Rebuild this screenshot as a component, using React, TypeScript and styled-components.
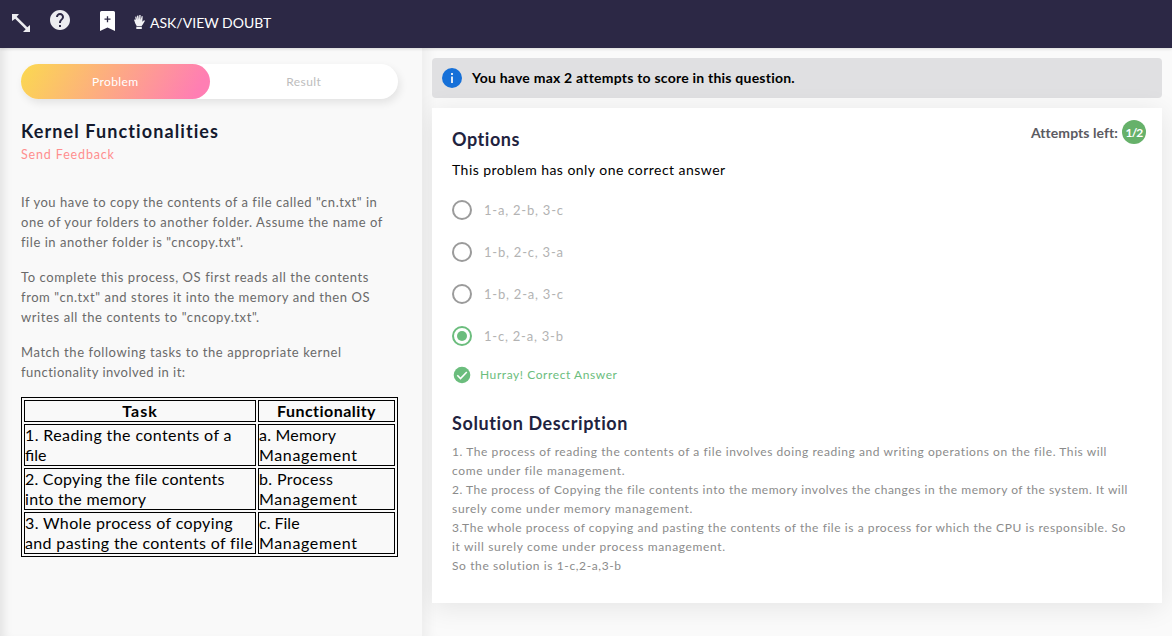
import React from 'react';
import styled, { createGlobalStyle } from 'styled-components';

const GlobalStyle = createGlobalStyle`
  * { box-sizing: border-box; }
  body { margin: 0; background: #fafafa; font-family: Lato, "Open Sans", sans-serif; color: #000; overflow: hidden; }
  p, h1, h2 { margin: 0; }
`;

const Page = styled.div`
  display: flex;
  flex-direction: column;
  height: 636px;
`;

const Header = styled.header`
  display: flex;
  flex: none;
  height: 48px;
  padding-left: 12px;
  background: #2c2845;
  color: #fff;
  box-shadow: 0 1px 3px rgba(0, 0, 0, 0.14);
  z-index: 2;
`;

const ExpandIcon = styled.svg`
  width: 18px;
  height: 18px;
  margin-top: 14px;
`;

const HelpIcon = styled.svg`
  width: 24px;
  height: 24px;
  margin: 8px 0 0 18px;
`;

const BookmarkIcon = styled.svg`
  width: 15px;
  height: 20px;
  margin: 11px 0 0 28px;
`;

const HandIcon = styled.svg`
  width: 11px;
  height: 14px;
  margin: 15px 5px 0 19px;
`;

const Line = styled.span<{ $track?: number }>`
  display: block;
  white-space: pre;
  letter-spacing: ${(p) => p.$track ?? 0}px;
`;

const DoubtLink = styled.div`
  margin-top: 13px;
  font-size: 14px;
  line-height: 20px;
`;

const Body = styled.main`
  display: flex;
  flex: 1;
  min-height: 0;
`;

const ProblemPane = styled.section`
  flex: none;
  width: 422px;
  padding: 16px 24px 0 21px;
  background: #f9f9f9;
  box-shadow: inset 10px 0 10px -6px rgba(0, 0, 0, 0.09);
  z-index: 1;
`;

const Tabs = styled.nav`
  display: flex;
  height: 35px;
  border-radius: 18px;
  background: #fff;
  box-shadow: 2px 4px 8px rgba(0, 0, 0, 0.09);
`;

const Tab = styled.div<{ $active?: boolean }>`
  display: flex;
  flex: 1;
  align-items: center;
  justify-content: center;
  border-radius: 18px;
  font-size: 12px;
  line-height: 16px;
  color: ${(p) => (p.$active ? '#fff' : '#bdbdbd')};
  background: ${(p) => (p.$active ? 'linear-gradient(119deg, #fbd950, #ff7eb3 92%)' : 'none')};
`;

const ProblemTitle = styled.h1`
  margin-top: 21px;
  font-size: 18px;
  line-height: 22px;
  color: #141a2e;
`;

const Feedback = styled.div`
  margin-top: 5px;
  font-size: 12.5px;
  line-height: 16px;
  color: #ff8f8f;
`;

const Statement = styled.div`
  display: flex;
  flex-direction: column;
  gap: 15px;
  margin-top: 29px;
  font-size: 13px;
  line-height: 20px;
  color: #6a6a6a;
`;

const TaskTable = styled.table`
  width: 377px;
  margin-top: 15px;
  border: 1px solid #000;
  border-spacing: 2px;
  table-layout: fixed;
  font-size: 16px;
  line-height: 20px;
`;

const Cell = styled.td`
  padding: 0;
  border: 1px solid #000;
`;

const HeadCell = styled.th<{ $width: number }>`
  width: ${(p) => p.$width}px;
  padding: 0;
  border: 1px solid #000;
`;

const AnswerPane = styled.section`
  flex: 1;
  padding: 10px 10px 0;
  box-shadow: inset 14px 0 12px -8px rgba(0, 0, 0, 0.05);
`;

const Notice = styled.div`
  display: flex;
  align-items: center;
  gap: 10px;
  height: 40px;
  padding-left: 10px;
  border-radius: 4px;
  background: #e0e0e2;
  font-size: 14px;
  font-weight: 700;
  line-height: 20px;
`;

const InfoIcon = styled.svg`
  width: 20px;
  height: 20px;
`;

const Card = styled.div`
  height: 495px;
  margin-top: 10px;
  padding: 12px 16px 0 20px;
  background: #fff;
  box-shadow: 0 4px 26px rgba(0, 0, 0, 0.09);
`;

const CardTop = styled.div`
  display: flex;
  justify-content: space-between;
  height: 39px;
`;

const Heading = styled.h2`
  padding-top: 8px;
  font-size: 18px;
  line-height: 22px;
  color: #1f2340;
`;

const Attempts = styled.div`
  display: flex;
  align-items: center;
  gap: 4px;
  height: 24px;
  font-size: 14px;
  font-weight: 700;
  color: #5b5b62;
`;

const AttemptBadge = styled.div`
  display: flex;
  align-items: center;
  justify-content: center;
  width: 24px;
  height: 24px;
  border-radius: 50%;
  background: #66b16a;
  color: #fff;
  font-size: 12px;
`;

const Hint = styled.div`
  margin-top: 1px;
  font-size: 14px;
  line-height: 20px;
`;

const OptionList = styled.div`
  display: flex;
  flex-direction: column;
  gap: 22px;
  margin-top: 20px;
`;

const Option = styled.div`
  display: flex;
  align-items: center;
  gap: 12px;
  height: 20px;
  font-size: 13px;
  line-height: 20px;
  color: #b3b3b3;
`;

const Radio = styled.span<{ $checked: boolean }>`
  width: 20px;
  height: 20px;
  border: 2px solid ${(p) => (p.$checked ? '#6bbd7d' : '#9b9b9b')};
  border-radius: 50%;
  padding: 3px;

  &::after {
    content: '';
    display: block;
    width: 10px;
    height: 10px;
    border-radius: 50%;
    background: ${(p) => (p.$checked ? '#6bbd7d' : 'transparent')};
  }
`;

const Verdict = styled.div`
  display: flex;
  align-items: center;
  gap: 8px;
  height: 20px;
  margin-top: 19px;
  font-size: 12px;
  line-height: 20px;
  color: #6bbd7d;
`;

const CheckIcon = styled.svg`
  width: 20px;
  height: 20px;
`;

const SolutionHeading = styled(Heading)`
  padding: 0;
  margin-top: 27px;
`;

const Solution = styled.div`
  margin-top: 8px;
  font-size: 12px;
  line-height: 19px;
  color: #8b8b8b;
`;

type TextLine = [text: string, track: number];

const statement: TextLine[][] = [
  [
    ['If you have to copy the contents of a file called "cn.txt" in', 0.54],
    ['one of your folders to another folder. Assume the name of', 0.57],
    ['file in another folder is "cncopy.txt".', 0.55],
  ],
  [
    ['To complete this process, OS first reads all the contents', 0.58],
    ['from "cn.txt" and stores it into the memory and then OS', 0.57],
    ['writes all the contents to "cncopy.txt".', 0.59],
  ],
  [
    ['Match the following tasks to the appropriate kernel', 0.57],
    ['functionality involved in it:', 0.48],
  ],
];

const tasks: [TextLine[], TextLine[]][] = [
  [
    [['1. Reading the contents of a', 0.4], ['file', 0]],
    [['a. Memory', 0.22], ['Management', 0.64]],
  ],
  [
    [['2. Copying the file contents', 0.24], ['into the memory', 0.31]],
    [['b. Process', 0.37], ['Management', 0.64]],
  ],
  [
    [['3. Whole process of copying', 0.36], ['and pasting the contents of file', 0.35]],
    [['c. File', 0], ['Management', 0.64]],
  ],
];

const options = [
  { label: '1-a, 2-b, 3-c', checked: false },
  { label: '1-b, 2-c, 3-a', checked: false },
  { label: '1-b, 2-a, 3-c', checked: false },
  { label: '1-c, 2-a, 3-b', checked: true },
];

const solution: TextLine[] = [
  ['1. The process of reading the contents of a file involves doing reading and writing operations on the file. This will', 0.57],
  ['come under file management.', 0.65],
  ['2. The process of Copying the file contents into the memory involves the changes in the memory of the system. It will', 0.53],
  ['surely come under memory management.', 0.68],
  ['3.The whole process of copying and pasting the contents of the file is a process for which the CPU is responsible. So', 0.57],
  ['it will surely come under process management.', 0.65],
  ['So the solution is 1-c,2-a,3-b', 0.61],
];

const Lines = ({ lines }: { lines: TextLine[] }) => (
  <>
    {lines.map(([text, track]) => (
      <Line key={text} $track={track}>{text}</Line>
    ))}
  </>
);

export default function App() {
  return (
    <Page>
      <GlobalStyle />
      <Header>
        <ExpandIcon viewBox="0 0 18 18" fill="#ececf0">
          <path d="M0 0h7L4.700 2.700 15.300 13.300 18 11v7h-7l2.700-2.700L3.100 4.700 0 7z" />
        </ExpandIcon>
        <HelpIcon viewBox="0 0 24 24" fill="#ececf0">
          <path d="M12 2C6.48 2 2 6.48 2 12s4.48 10 10 10 10-4.48 10-10S17.52 2 12 2zm1 17h-2v-2h2v2zm2.07-7.75l-.9.92C13.45 12.9 13 13.5 13 15h-2v-.5c0-1.1.45-2.1 1.17-2.83l1.24-1.26c.37-.36.59-.86.59-1.41 0-1.1-.9-2-2-2s-2 .9-2 2H8c0-2.21 1.79-4 4-4s4 1.79 4 4c0 .88-.36 1.68-.93 2.25z" />
        </HelpIcon>
        <BookmarkIcon viewBox="0 0 15 20" fill="#fff">
          <path d="M1.5 0h12A1.5 1.5 0 0 1 15 1.5V20l-7.5-3.5L0 20V1.5A1.5 1.5 0 0 1 1.5 0z" />
          <path d="M7.5 5.200v6M4.500 8.200h6" stroke="#2c2845" strokeWidth="1.300" />
        </BookmarkIcon>
        <HandIcon viewBox="0 0 11 14" fill="#f2f2f5">
          <path d="M1.200 1.800 2.300 1.500 3.200 5 3 .800 4.300.500 5 4.800 5.300 0 6.600.100 6.600 4.900 7.700 1 8.700 1.300 8.300 6.800 10 5.200 11 5.800 8.600 9.700 7.600 11H2.700L1.300 8.600 0 4.700 1.100 4.400 1.700 5z" />
          <path d="M2.300 11.700h5.500V14H2.300z" />
        </HandIcon>
        <DoubtLink><Line>ASK/VIEW DOUBT</Line></DoubtLink>
      </Header>
      <Body>
        <ProblemPane>
          <Tabs>
            <Tab $active><Line $track={0.37}>Problem</Line></Tab>
            <Tab><Line $track={0.4}>Result</Line></Tab>
          </Tabs>
          <ProblemTitle><Line $track={1.1}>Kernel Functionalities</Line></ProblemTitle>
          <Feedback><Line $track={0.85}>Send Feedback</Line></Feedback>
          <Statement>
            {statement.map((lines) => (
              <p key={lines[0][0]}><Lines lines={lines} /></p>
            ))}
          </Statement>
          <TaskTable>
            <thead>
              <tr>
                <HeadCell $width={232}><Line $track={1}>Task</Line></HeadCell>
                <HeadCell $width={137}><Line $track={0.45}>Functionality</Line></HeadCell>
              </tr>
            </thead>
            <tbody>
              {tasks.map(([task, role]) => (
                <tr key={task[0][0]}>
                  <Cell><Lines lines={task} /></Cell>
                  <Cell><Lines lines={role} /></Cell>
                </tr>
              ))}
            </tbody>
          </TaskTable>
        </ProblemPane>
        <AnswerPane>
          <Notice>
            <InfoIcon viewBox="0 0 20 20">
              <circle cx="10" cy="10" r="10" fill="#1670d8" />
              <path d="M9 5h2v2H9zM9 8.500h2V15H9z" fill="#dfe9f6" />
            </InfoIcon>
            <Line $track={0.22}>You have max 2 attempts to score in this question.</Line>
          </Notice>
          <Card>
            <CardTop>
              <Heading><Line $track={0.55}>Options</Line></Heading>
              <Attempts>
                <Line $track={0.06}>Attempts left:</Line>
                <AttemptBadge><Line $track={-0.9}>1/2</Line></AttemptBadge>
              </Attempts>
            </CardTop>
            <Hint><Line $track={0.46}>This problem has only one correct answer</Line></Hint>
            <OptionList>
              {options.map(({ label, checked }) => (
                <Option key={label}>
                  <Radio $checked={checked} />
                  <Line $track={0.78}>{label}</Line>
                </Option>
              ))}
            </OptionList>
            <Verdict>
              <CheckIcon viewBox="0 0 20 20">
                <circle cx="10" cy="10" r="8.300" fill="#6bbd7d" />
                <path d="m5.300 10.300 3.200 3.200 6.300-6.500" fill="none" stroke="#fff" strokeWidth="1.600" />
              </CheckIcon>
              <Line $track={0.57}>Hurray! Correct Answer</Line>
            </Verdict>
            <SolutionHeading><Line $track={0.61}>Solution Description</Line></SolutionHeading>
            <Solution><Lines lines={solution} /></Solution>
          </Card>
        </AnswerPane>
      </Body>
    </Page>
  );
}
